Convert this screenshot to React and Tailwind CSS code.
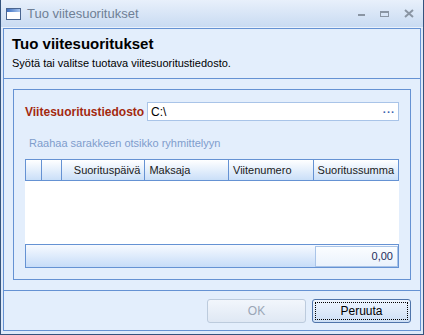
const cols = [
  { w: "w-[16px]", label: "", align: "" },
  { w: "w-[20px]", label: "", align: "" },
  { w: "w-[84px]", label: "Suorituspäivä", align: "justify-end" },
  { w: "w-[84px]", label: "Maksaja", align: "justify-start" },
  { w: "w-[85px]", label: "Viitenumero", align: "justify-start" },
  { w: "flex-1", label: "Suoritussumma", align: "justify-end" },
];

const TitleBar = () => (
  <div className="h-[28px] flex items-center bg-gradient-to-b from-[#e8f0fb] to-[#c9dbf2] border-b border-[#e9f1fc]">
    <div className="ml-[5px] w-[15px] h-[12px] border border-[#4a6590] bg-white flex flex-col">
      <div className="h-[3px] bg-gradient-to-r from-[#3f6fc0] to-[#a9c6ee]" />
    </div>
    <span className="ml-[6px] text-[13px] text-[#6f7f95]">Tuo viitesuoritukset</span>
    <div className="ml-auto flex items-center mr-[9px] gap-[15px] text-[#7b8796]">
      <div className="w-[7px] h-[2px] bg-[#8a95a3] mt-[3px]" />
      <div className="w-[9px] h-[6px] border border-[#8a95a3] border-t-[2px]" />
      <svg width="10" height="9" viewBox="0 0 10 9">
        <path d="M1 1 L9 8 M9 1 L1 8" stroke="#8a95a3" strokeWidth="2" />
      </svg>
    </div>
  </div>
);

const Grid = () => (
  <div className="mt-[8px] w-[374px] flex flex-col">
    <div className="flex h-[22px] border border-[#6592d3] bg-gradient-to-b from-white to-[#cadff8]">
      {cols.map((c, i) => (
        <div
          key={i}
          className={`${c.w} flex items-center ${c.align} px-[4px] text-[11px] text-[#1a1a1a] ${i < cols.length - 1 ? "border-r border-[#6592d3]" : ""}`}
        >
          {c.label}
        </div>
      ))}
    </div>
    <div className="h-[63px] bg-white" />
    <div className="h-[24px] flex items-center justify-end border border-[#6592d3] bg-gradient-to-b from-[#f7faff] to-[#c6dcf8]">
      <div className="w-[83px] h-[21px] border border-[#a9c4e8] bg-gradient-to-b from-[#fbfdff] to-[#eaf2fc] flex items-center justify-end pr-[4px] text-[11px] text-[#1d2c5c]">
        0,00
      </div>
    </div>
  </div>
);

export default function App() {
  return (
    <div className="w-[424px] h-[335px] flex flex-col bg-[#dde9f9] border-x border-b border-[#34537d] font-['Liberation_Sans',Arial,sans-serif] overflow-hidden">
      <TitleBar />
      <div className="flex-1 flex flex-col px-[2px] pb-[2px]">
        <div className="h-[51px] border border-[#6592d3] bg-[#e3eefc] pl-[8px] flex flex-col">
          <div className="mt-[6px] text-[15px] font-bold text-black leading-[18px]">Tuo viitesuoritukset</div>
          <div className="mt-[4px] text-[11px] text-black leading-[13px]">Syötä tai valitse tuotava viitesuoritustiedosto.</div>
        </div>
        <div className="h-[211px] border-x border-[#6592d3] bg-[#e3eefc] px-[9px] pt-[10px]">
          <div className="h-[191px] border border-[#6592d3] px-[11px] pt-[12px] flex flex-col">
            <div className="flex items-center h-[19px]">
              <span className="w-[122px] text-[12px] font-bold text-[#a3290f]">Viitesuoritustiedosto</span>
              <div className="flex-1 h-[19px] border border-[#a9c4e8] bg-white flex items-center px-[3px] text-[12px] text-black">
                <span>C:\</span>
                <span className="ml-auto text-[#3b64b0] font-bold text-[11px] tracking-[1px] leading-none pb-[4px]">...</span>
              </div>
            </div>
            <div className="mt-[16px] ml-[4px] text-[11px] text-[#7f9dcc] leading-[13px]">Raahaa sarakkeen otsikko ryhmittelyyn</div>
            <div className="mt-[1px]">
              <Grid />
            </div>
          </div>
        </div>
        <div className="h-[41px] border border-[#6592d3] bg-[#e3eefc] flex items-center justify-end pr-[9px] gap-[6px]">
          <button className="w-[99px] h-[24px] rounded-[3px] border border-[#bccbdd] bg-gradient-to-b from-[#f2f6fc] to-[#dfe8f4] text-[12px] text-[#9aa6b6]">
            OK
          </button>
          <button className="w-[99px] h-[24px] rounded-[3px] border border-[#4f74aa] bg-gradient-to-b from-[#eef5fe] to-[#cddff5] p-[2px]">
            <div className="w-full h-full border border-dotted border-black flex items-center justify-center text-[12px] text-black">
              Peruuta
            </div>
          </button>
        </div>
      </div>
    </div>
  );
}
